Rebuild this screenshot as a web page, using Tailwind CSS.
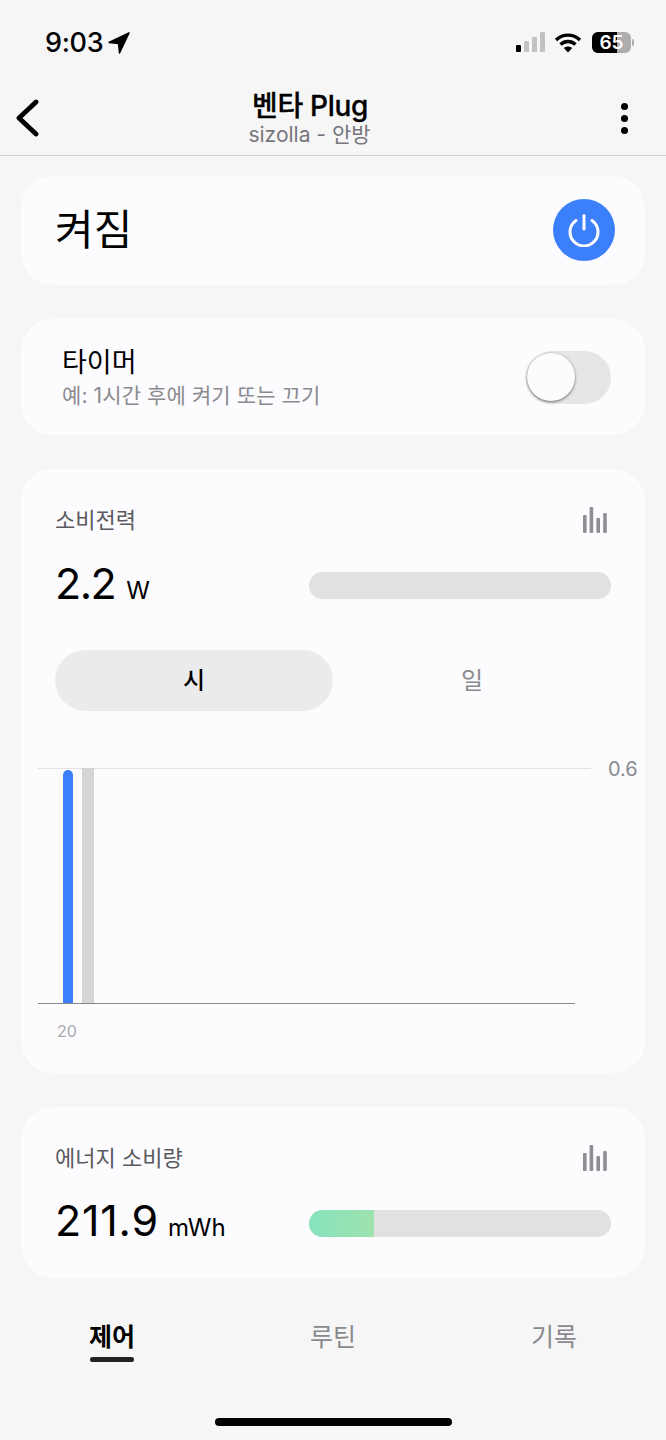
<!DOCTYPE html>
<html lang="ko">
<head>
    <meta charset="UTF-8">
    <meta name="viewport" content="width=device-width, initial-scale=1.0">
    <title>벤타 Plug</title>
    <script src="https://cdn.jsdelivr.net/npm/@tailwindcss/browser@4"></script>
</head>
<body class="bg-[#f6f6f7] font-['Inter','Noto_Sans_CJK_KR',sans-serif] text-black">
<div class="w-[666px] h-[1440px] overflow-hidden flex flex-col relative">

    <!-- status bar -->
    <div class="h-[75px] flex items-start justify-between pl-[45px] pr-[32px] pt-[28px] shrink-0">
        <div class="flex items-center gap-[5px] h-[30px]">
            <span class="text-[27px] font-medium leading-[30px] tracking-[-0.3px]">9:03</span>
            <svg width="22" height="22" viewBox="0 0 22 22"><path d="M21 1 L1 10.5 L10.5 11.5 L11.5 21 Z" fill="#000" stroke="#000" stroke-width="1.5" stroke-linejoin="round"/></svg>
        </div>
        <div class="flex items-center h-[30px] -mt-[1px]">
            <div class="flex items-end gap-[3px] h-[20px]">
                <span class="w-[5px] h-[7px] rounded-[1px] bg-black"></span>
                <span class="w-[5px] h-[11px] rounded-[1px] bg-[#c2c2c2]"></span>
                <span class="w-[5px] h-[15px] rounded-[1px] bg-[#c2c2c2]"></span>
                <span class="w-[5px] h-[20px] rounded-[1px] bg-[#c2c2c2]"></span>
            </div>
            <svg class="ml-[9px]" width="28" height="21" viewBox="0 0 28 21" fill="none" stroke="#000" stroke-width="3.4"><path d="M2 8 C9 1.5 19 1.5 26 8"/><path d="M6.5 12.5 C11 8.5 17 8.5 21.5 12.5"/><path d="M14 20.5 L9.8 16 C12 14 16 14 18.2 16 Z" fill="#000" stroke="none"/></svg>
            <div class="ml-[10px] relative w-[39px] h-[21px] rounded-[6px] bg-[#adadad]">
                <div class="absolute left-0 top-0 h-full w-[25px] rounded-l-[6px] bg-black"></div>
                <span class="absolute inset-0 flex items-center justify-center text-white text-[19px] font-semibold leading-none">65</span>
            </div>
            <span class="ml-[1px] w-[2px] h-[7px] rounded-r-full bg-[#adadad]"></span>
        </div>
    </div>

    <!-- header -->
    <header class="h-[81px] shrink-0 relative border-b border-[#d2d2d4] flex flex-col items-center pt-[15px]">
        <svg class="absolute left-[15px] top-[24px]" width="24" height="38" viewBox="0 0 24 38" fill="none" stroke="#000" stroke-width="4.8" stroke-linecap="round" stroke-linejoin="round"><path d="M21 3 L4 19 L21 35"/></svg>
        <div class="ml-[-46px] text-[28px] font-medium leading-[32px] tracking-[-0.3px] [-webkit-text-stroke:0.3px_#000]">벤타 Plug</div>
        <div class="ml-[-47px] text-[21px] leading-[26px] text-[#77777b]">sizolla - 안방</div>
        <div class="absolute right-[38px] top-[28px] flex flex-col gap-[5px]">
            <span class="w-[7px] h-[7px] rounded-full bg-black"></span>
            <span class="w-[7px] h-[7px] rounded-full bg-black"></span>
            <span class="w-[7px] h-[7px] rounded-full bg-black"></span>
        </div>
    </header>

    <main class="flex flex-col gap-[34px] px-[21px] pt-[20px]">
        <!-- power -->
        <section class="h-[109px] rounded-[32px] bg-[#fcfcff] flex items-center justify-between pl-[34px] pr-[30px]">
            <span class="text-[42px] font-normal leading-none mt-[-2px]">켜짐</span>
            <div class="w-[62px] h-[62px] rounded-full bg-[#3b7ffb] flex items-center justify-center mt-[-2px]">
                <svg width="34" height="34" viewBox="0 0 34 34" fill="none" stroke="#fcfcff" stroke-width="3" stroke-linecap="round"><path d="M17 2.5 V16"/><path d="M9 7.5 A14 14 0 1 0 25 7.5"/></svg>
            </div>
        </section>

        <!-- timer -->
        <section class="h-[116px] rounded-[32px] bg-[#fcfcff] flex items-center justify-between pl-[41px] pr-[34px]">
            <div class="flex flex-col">
                <span class="text-[27px] leading-[34px]">타이머</span>
                <span class="text-[21px] leading-[28px] tracking-[0.1px] text-[#8a8a8e] mt-[2px] mb-[-2px]">예: 1시간 후에 켜기 또는 끄기</span>
            </div>
            <div class="relative w-[85px] h-[53px] rounded-full bg-[#e6e6e9]">
                <div class="absolute left-[1px] top-[2px] w-[48px] h-[48px] rounded-full bg-[#fcfcff] shadow-[0_1px_3px_rgba(0,0,0,0.55)]"></div>
            </div>
        </section>

        <!-- power usage -->
        <section class="h-[604px] rounded-[32px] bg-[#fcfcff] px-[34px] pt-[35px] flex flex-col">
            <div class="flex items-center justify-between h-[32px]">
                <span class="text-[22px] text-[#5a5a5e] leading-[32px]">소비전력</span>
                <svg class="mr-[4px]" width="24" height="26" viewBox="0 0 24 26" fill="#8e8e93"><rect x="0" y="8" width="3.6" height="18" rx="1"/><rect x="6.6" y="0" width="3.6" height="26" rx="1"/><rect x="13.4" y="11" width="3.6" height="15" rx="1"/><rect x="20.2" y="6" width="3.6" height="20" rx="1"/></svg>
            </div>
            <div class="flex items-center justify-between mt-[24px] h-[50px]">
                <div class="flex items-baseline gap-[11px] -mt-[4px]">
                    <span class="text-[43px] leading-[50px] tracking-[-1.5px]">2.2</span>
                    <span class="text-[24px] leading-none">W</span>
                </div>
                <div class="w-[302px] h-[27px] rounded-full bg-[#e1e1e1]"></div>
            </div>
            <div class="flex mt-[40px] h-[61px]">
                <div class="w-[278px] rounded-full bg-[#ebebee] flex items-center justify-center text-[24px] font-medium">시</div>
                <div class="w-[278px] flex items-center justify-center text-[24px] text-[#8a8a8e]">일</div>
            </div>
            <!-- chart -->
            <div class="relative h-[300px] mt-[47px] -mx-[34px]">
                <div class="absolute left-[17px] top-[10px] w-[553px] h-[1px] bg-[#e2e2e4]"></div>
                <span class="absolute left-[587px] top-0 text-[20px] leading-[22px] text-[#8a8a8e]">0.6</span>
                <div class="absolute left-[42px] top-[12px] w-[10px] h-[233px] rounded-t-full bg-[#3b7ffb]"></div>
                <div class="absolute left-[61px] top-[10px] w-[12px] h-[235px] bg-[#d5d5d5]"></div>
                <div class="absolute left-[17px] top-[245px] w-[537px] h-[1px] bg-[#88888a]"></div>
                <span class="absolute left-[36px] top-[263px] text-[16px] leading-[20px] text-[#a9a9ad]">20</span>
            </div>
        </section>

        <!-- energy usage -->
        <section class="h-[171px] rounded-[32px] bg-[#fcfcff] px-[34px] pt-[35px] flex flex-col">
            <div class="flex items-center justify-between h-[32px]">
                <span class="text-[22px] text-[#5a5a5e] leading-[32px]">에너지 소비량</span>
                <svg class="mr-[4px]" width="24" height="26" viewBox="0 0 24 26" fill="#8e8e93"><rect x="0" y="8" width="3.6" height="18" rx="1"/><rect x="6.6" y="0" width="3.6" height="26" rx="1"/><rect x="13.4" y="11" width="3.6" height="15" rx="1"/><rect x="20.2" y="6" width="3.6" height="20" rx="1"/></svg>
            </div>
            <div class="flex items-center justify-between mt-[24px] h-[50px]">
                <div class="flex items-baseline gap-[9px] -mt-[6px]">
                    <span class="text-[43px] leading-[50px] tracking-[0.8px]">211.9</span>
                    <span class="text-[24px] leading-none">mWh</span>
                </div>
                <div class="w-[302px] h-[27px] rounded-full bg-[#e1e1e1] overflow-hidden">
                    <div class="w-[65px] h-full bg-gradient-to-r from-[#86e3bd] to-[#9ee2ae]"></div>
                </div>
            </div>
        </section>
    </main>

    <!-- tabs -->
    <nav class="flex justify-between pl-[89px] pr-[89px] mt-[41px] text-[25px] leading-[36px]">
        <div class="flex flex-col items-center">
            <span class="font-semibold">제어</span>
            <span class="w-[44px] h-[5px] rounded-full bg-[#222226] mt-[2px]"></span>
        </div>
        <span class="text-[#8a8a8e]">루틴</span>
        <span class="text-[#8a8a8e]">기록</span>
    </nav>

    <div class="absolute left-[215px] top-[1418px] w-[237px] h-[8px] rounded-full bg-black"></div>
</div>
</body>
</html>
